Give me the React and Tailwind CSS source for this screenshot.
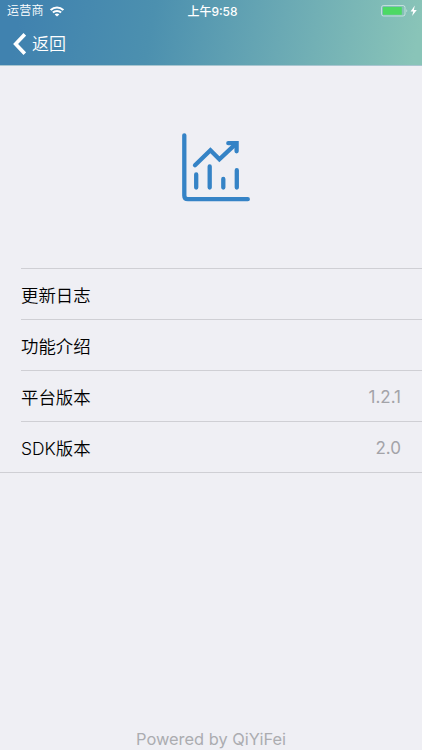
import React from 'react';

const rows = [
    { label: '更新日志' },
    { label: '功能介绍' },
    { label: '平台版本', value: '1.2.1' },
    { label: 'SDK版本', value: '2.0' },
];

const WifiIcon = () => (
    <svg width="14" height="11" viewBox="0 0 14 11" fill="none" stroke="white" strokeWidth="2.1">
        <path d="M0.7 4.1C4.3 0.6 9.7 0.6 13.3 4.1" />
        <path d="M2.9 6.6C5.2 4.4 8.8 4.4 11.1 6.6" />
        <path d="M7 10.6L4.7 8.5C5.9 7.2 8.1 7.2 9.3 8.5Z" fill="white" stroke="none" />
    </svg>
);

const BatteryIcon = () => (
    <svg width="37" height="12" viewBox="0 0 37 12">
        <rect x="0.5" y="0.5" width="23.5" height="10.5" rx="2" fill="none" stroke="white" strokeOpacity="0.5" />
        <rect x="2" y="2" width="18.8" height="7.8" rx="0.6" fill="#4cd964" />
        <path d="M25.4 4.2C26.5 4.6 26.5 6.9 25.4 7.3Z" fill="white" fillOpacity="0.5" />
        <path d="M33.8 0.6L29.6 6.4H32.2L31.1 11L35.8 4.9H32.9Z" fill="white" />
    </svg>
);

const ChartLogo = () => (
    <svg
        width="70"
        height="70"
        viewBox="0 0 70 70"
        fill="none"
        stroke="#3583c6"
        strokeWidth="4.3"
        strokeLinecap="round"
        strokeLinejoin="round"
    >
        <path d="M3.3 3.3V63.5Q3.3 67.2 7 67.2H66.8" />
        <path d="M14 33.3L29.4 18.2L38.4 27.3L54 12.6" strokeLinejoin="miter" />
        <path d="M47.3 11.2H55.6V19.3" strokeLinejoin="miter" />
        <path d="M50 11.5H55.5V17Z" fill="#3583c6" stroke="none" />
        <path d="M15.2 42.5V55.6M28.7 34.5V55.6M42.3 47V55.6M55.8 38.2V55.6" />
    </svg>
);

const App = () => {
    return (
        <div className="flex h-[750px] w-full flex-col bg-[#efeff4] font-['Inter','Noto_Sans_CJK_SC',sans-serif]">
            {/* Status bar and navigation */}
            <header className="h-[66px] shrink-0 border-b border-[#a9c6d0] bg-[linear-gradient(100deg,#4082af_5%,#4c90af_36%,#6aa9b4_66%,#89c4b8_98%)] text-white">
                <div className="grid h-[22px] grid-cols-3 items-center pr-1 pl-[7px] text-[12px] leading-[22px]">
                    <div className="flex h-[22px] items-center gap-[6px]">
                        <span className="font-[350] tracking-[0.2px]">运营商</span>
                        <WifiIcon />
                    </div>
                    <span className="h-[22px] text-center leading-[23px] font-medium">上午9:58</span>
                    <div className="flex justify-end">
                        <BatteryIcon />
                    </div>
                </div>
                <button className="flex h-[43px] items-center gap-[6px] pl-[13px]">
                    <svg width="13" height="22" viewBox="0 0 13 22" fill="none" stroke="white" strokeWidth="3.6">
                        <path d="M11.8 1.3L2.6 11L11.8 20.7" />
                    </svg>
                    <span className="text-[17px] leading-6 font-[350]">返回</span>
                </button>
            </header>

            <div className="flex h-[202px] shrink-0 items-center justify-center pl-[9px]">
                <ChartLogo />
            </div>

            {/* Settings list */}
            <ul className="border-b border-[#cfcfd4]">
                {rows.map((row) => (
                    <li key={row.label} className="ml-[21px] flex h-[51px] items-center justify-between border-t border-[#cfcfd4] pt-[4px] pr-[21px] text-[17.4px] font-[350]">
                        <span className="text-black">{row.label}</span>
                        {row.value && <span className="text-[17px] font-normal text-[#a3a3a8]">{row.value}</span>}
                    </li>
                ))}
            </ul>

            <footer className="mt-auto text-center text-[16.4px] leading-[21px] text-[#abacb0]">Powered by QiYiFei</footer>
        </div>
    );
};

export default App;
